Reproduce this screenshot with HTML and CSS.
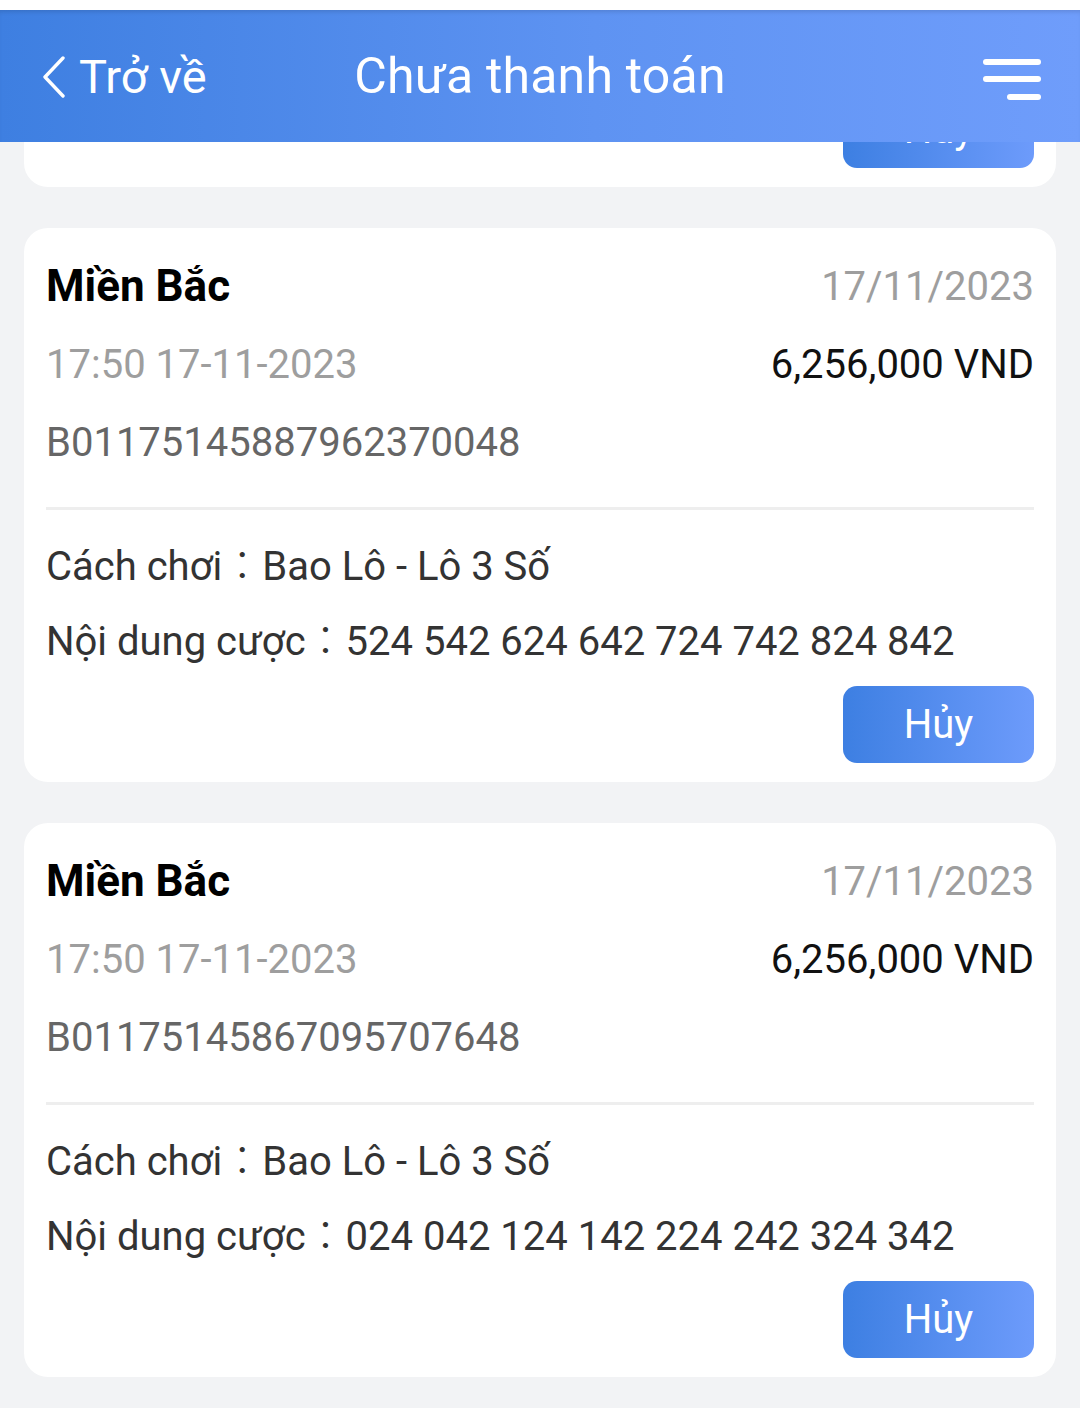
FILE: index.html
```html
<!DOCTYPE html>
<html lang="vi">
<head>
    <meta charset="UTF-8">
    <meta name="viewport" content="width=device-width, initial-scale=1.0">
    <title>Chưa thanh toán</title>
    <link rel="stylesheet" href="styles.css">
</head>
<body>
    <div class="status-strip"></div>

    <header class="topbar">
        <a class="back" href="#">
            <svg class="back-icon" viewBox="0 0 24 42" width="24" height="42">
                <path d="M21 2 L3 21 L21 40" fill="none" stroke="#fff" stroke-width="3.4" stroke-linecap="round" stroke-linejoin="round"/>
            </svg>
            <span>Trở về</span>
        </a>
        <h1 class="page-title">Chưa thanh toán</h1>
        <div class="menu">
            <svg viewBox="0 0 58 42" width="58" height="42">
                <line x1="3" y1="4" x2="55" y2="4" stroke="#fff" stroke-width="6" stroke-linecap="round"/>
                <line x1="3" y1="21" x2="55" y2="21" stroke="#fff" stroke-width="6" stroke-linecap="round"/>
                <line x1="27" y1="39" x2="55" y2="39" stroke="#fff" stroke-width="6" stroke-linecap="round"/>
            </svg>
        </div>
    </header>

    <div class="scroll">
        <div class="ticket-list">
            <!-- phần cuối của vé phía trên (đã cuộn) -->
            <div class="ticket ticket-cut">
                <div class="actions">
                    <button class="btn-cancel">Hủy</button>
                </div>
            </div>

            <div class="ticket">
                <div class="row">
                    <span class="region">Miền Bắc</span>
                    <span class="draw-date">17/11/2023</span>
                </div>
                <div class="row">
                    <span class="time">17:50 17-11-2023</span>
                    <span class="amount">6,256,000 VND</span>
                </div>
                <div class="row">
                    <span class="code">B01175145887962370048</span>
                </div>
                <div class="sep"></div>
                <div class="detail">Cách chơi<span class="colon">：</span>Bao Lô - Lô 3 Số</div>
                <div class="detail">Nội dung cược<span class="colon">：</span>524 542 624 642 724 742 824 842</div>
                <div class="actions">
                    <button class="btn-cancel">Hủy</button>
                </div>
            </div>

            <div class="ticket">
                <div class="row">
                    <span class="region">Miền Bắc</span>
                    <span class="draw-date">17/11/2023</span>
                </div>
                <div class="row">
                    <span class="time">17:50 17-11-2023</span>
                    <span class="amount">6,256,000 VND</span>
                </div>
                <div class="row">
                    <span class="code">B01175145867095707648</span>
                </div>
                <div class="sep"></div>
                <div class="detail">Cách chơi<span class="colon">：</span>Bao Lô - Lô 3 Số</div>
                <div class="detail">Nội dung cược<span class="colon">：</span>024 042 124 142 224 242 324 342</div>
                <div class="actions">
                    <button class="btn-cancel">Hủy</button>
                </div>
            </div>
        </div>
    </div>
</body>
</html>
```

FILE: styles.css
```css
html, body {
    margin: 0;
    padding: 0;
}
body {
    font-family: Roboto, "Noto Sans CJK TC", sans-serif;
    background-color: #f2f3f5;
    height: 1408px;
    overflow: hidden;
}
.status-strip {
    height: 10px;
    background-color: #fff;
}
.topbar {
    height: 132px;
    display: grid;
    grid-template-columns: 1fr auto 1fr;
    align-items: center;
    background: linear-gradient(90deg, #3e7fe1 0%, #5e93f2 55%, #6f9dfb 100%);
    color: #fff;
    position: relative;
    z-index: 2;
    box-shadow: inset 0 4px 4px -2px rgba(0, 0, 0, 0.12);
}
.back {
    display: flex;
    align-items: center;
    color: #fff;
    text-decoration: none;
    font-size: 47px;
    padding-left: 42px;
}
.back-icon {
    margin-right: 13px;
    margin-top: 2px;
}
.page-title {
    margin: 0;
    font-size: 50px;
    font-weight: 400;
    letter-spacing: 0.2px;
}
.menu {
    display: flex;
    justify-content: flex-end;
    padding-right: 39px;
    padding-top: 6px;
}
.scroll {
    height: 1266px;
    overflow: hidden;
}
.ticket-list {
    display: flex;
    flex-direction: column;
    gap: 41px;
    padding: 0 24px;
}
.ticket {
    background-color: #fff;
    border-radius: 24px;
    padding: 19px 22px 19px;
}
.ticket-cut {
    margin-top: -58px; /* danh sách đã cuộn xuống */
    padding-top: 0;
}
.row {
    display: flex;
    justify-content: space-between;
    align-items: center;
    height: 78px;
    font-size: 40px;
}
.region {
    font-size: 44px;
    font-weight: 700;
    color: #000;
}
.draw-date, .time {
    color: #9e9e9e;
}
.amount {
    color: #111;
}
.code {
    color: #666;
}
.sep {
    height: 3px;
    background-color: #eeeeee;
    margin: 26px 0 19px;
}
.detail {
    font-size: 40px;
    line-height: 75px;
    color: #333;
    white-space: nowrap;
}
.colon {
    font-family: "Noto Sans CJK TC", sans-serif;
    font-weight: 300;
    line-height: 1;
}
.actions {
    display: flex;
    justify-content: flex-end;
    margin-top: 7px;
}
.btn-cancel {
    width: 191px;
    height: 77px;
    border: none;
    border-radius: 14px;
    background: linear-gradient(90deg, #3d7fe2, #6d9bfb);
    color: #fff;
    font-family: inherit;
    font-size: 40px;
    padding: 0;
}
```
